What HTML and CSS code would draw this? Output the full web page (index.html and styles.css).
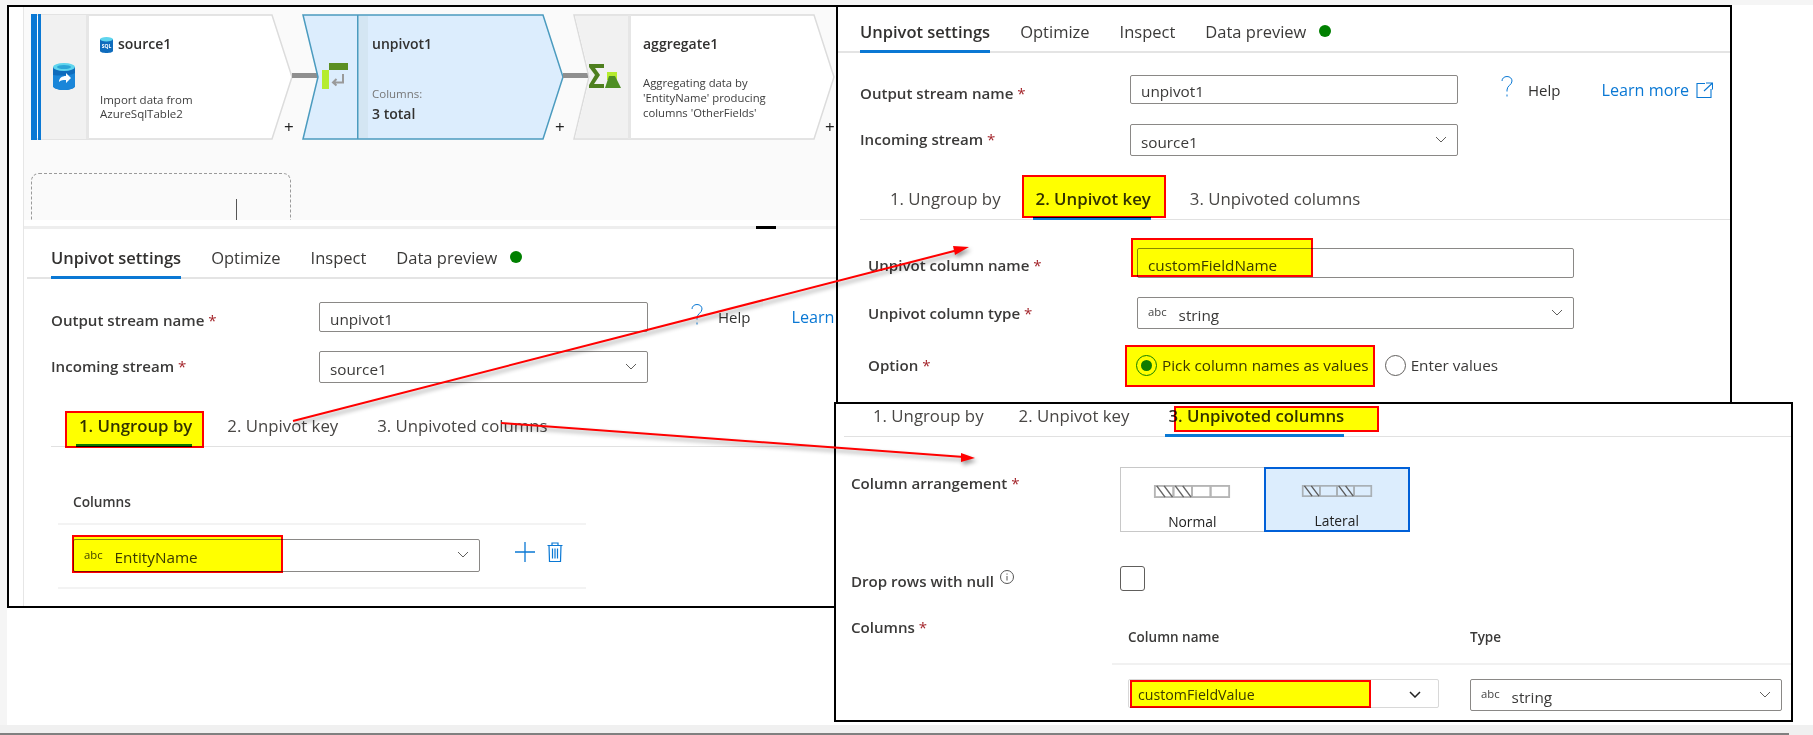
FILE: index.html
```html
<!DOCTYPE html>
<html lang="en">
<head>
<meta charset="utf-8">
<title>Unpivot settings</title>
<link rel="stylesheet" href="styles.css">
</head>
<body>
<div class="desk">
  <div class="band-top"></div>
  <div class="band-left"></div>
  <div class="band-bottom"></div>

  <section class="window win-main">
    <div class="workspace">
      <div class="canvas">
        <div class="node node-source">
          <svg class="node-bg" viewBox="0 0 262 126" width="262" height="126">
            <polygon points="1,1 241,1 261,63 241,125 1,125" fill="#fff" stroke="#dcdcdc" stroke-width="1.5"/>
            <rect x="10" y="1" width="45" height="124" fill="#f1f1f1"/>
            <rect x="55" y="1" width="3" height="124" fill="#e6e6e6"/>
            <rect x="0" y="0" width="6" height="126" fill="#0a78d4"/>
            <rect x="7" y="0" width="3" height="126" fill="#0a78d4"/>
          </svg>
          <div class="cell">
            <svg class="ico-src" viewBox="0 0 22 27" width="22" height="27">
              <path d="M0 4v19c0 2 5 4 11 4s11-2 11-4V4z" fill="#0f6cbd"/>
              <path d="M0 12v11c0 2 5 4 11 4s11-2 11-4V10c-5 3-15 3-22 2z" fill="#1a86d9"/>
              <ellipse cx="11" cy="4" rx="11" ry="4" fill="#5fd5ee"/>
              <ellipse cx="11" cy="4" rx="7" ry="2" fill="#2ba5d8"/>
              <path d="M6 19c0-4 3-6 7-6v-3l5 5-5 5v-3c-3 0-5 0-7 2z" fill="#fff"/>
            </svg>
          </div>
          <div class="body body-source">
            <div class="node-title">
              <svg class="ico-sql" viewBox="0 0 13 16" width="13" height="16">
                <path d="M0 2v12c0 1 3 2 6.500 2s6.500-1 6.500-2V2z" fill="#0f6cbd"/>
                <ellipse cx="6.500" cy="2.200" rx="6.500" ry="2.200" fill="#5fd5ee"/>
                <text x="6.500" y="11" class="sql-text" text-anchor="middle">SQL</text>
              </svg>
              <span>source1</span>
            </div>
            <p class="desc desc-source">Import data from<br>AzureSqlTable2</p>
          </div>
        </div>
        <div class="link link-a"></div>
        <span class="add add-a">+</span>

        <div class="node node-unpivot">
          <svg class="node-bg" viewBox="0 0 262 126" width="262" height="126">
            <polygon points="1,1 241,1 261,63 241,125 1,125 16,63" fill="#dcedfd" stroke="#4b9bbf" stroke-width="1.5"/>
            <rect x="56" y="2" width="10" height="122" fill="#d4e6f3"/>
            <rect x="55" y="1" width="1.500" height="124" fill="#4b9bbf"/>
          </svg>
          <div class="cell">
            <svg class="ico-unp" viewBox="0 0 26 26" width="26" height="26">
              <rect x="0" y="7" width="7" height="19" fill="#b5ec2e"/>
              <rect x="7" y="0" width="19" height="7" fill="#5b8f22"/>
              <path d="M21 11v8.500H11M14.500 16l-3.500 3.500 3.500 3" fill="none" stroke="#9a9a9a" stroke-width="2"/>
            </svg>
          </div>
          <div class="body body-unpivot">
            <div class="node-title"><span>unpivot1</span></div>
            <p class="meta-label">Columns:</p>
            <p class="meta-value">3 total</p>
          </div>
        </div>
        <div class="link link-b"></div>
        <span class="add add-b">+</span>

        <div class="node node-agg">
          <svg class="node-bg" viewBox="0 0 262 126" width="262" height="126">
            <polygon points="1,1 241,1 261,63 241,125 1,125 16,63" fill="#fff" stroke="#dcdcdc" stroke-width="1.5"/>
            <polygon points="2,2 55,2 55,124 2,124 17,63" fill="#f1f1f1"/>
            <rect x="55" y="1" width="3" height="124" fill="#e6e6e6"/>
          </svg>
          <div class="cell">
            <svg class="ico-agg" viewBox="0 0 33 24" width="33" height="24">
              <path d="M0 0h15v4H6l5 7-6 9h10v4H0v-3l6-10L0 3z" fill="#4e7f1f"/>
              <rect x="18" y="8" width="10" height="8" fill="#b5ec2e"/>
              <path d="M20 12h6l6 12H16z" fill="#4e8f24"/>
            </svg>
          </div>
          <div class="body body-agg">
            <div class="node-title"><span>aggregate1</span></div>
            <p class="desc desc-agg">Aggregating data by<br>'EntityName' producing<br>columns 'OtherFields'</p>
          </div>
        </div>
        <span class="add add-c">+</span>

        <div class="ghost"><span class="ghost-bar"></span></div>
      </div>
      <div class="splitter"><span class="splitter-grip"></span></div>

      <div class="tabs tabs-main">
        <span class="tab is-active">Unpivot settings</span>
        <span class="tab">Optimize</span>
        <span class="tab">Inspect</span>
        <span class="tab tab-preview">Data preview</span>
        <span class="dot"></span>
      </div>

      <div class="form form-main">
        <label class="label label-low">Output stream name <i>*</i></label>
        <div class="input">unpivot1</div>
        <div class="help">
          <svg class="ico-q" viewBox="0 0 12 21" width="12" height="21"><path d="M1 5c0-2.500 2-4.500 5-4.500s5 2 5 4.500c0 4-5 4.500-5 9v1.500M6 18.500v2" fill="none" stroke="#0a78d4" stroke-width="1"/></svg>
          <span class="help-text">Help</span>
          <a class="learn">Learn more</a>
        </div>
        <label class="label label-high">Incoming stream <i>*</i></label>
        <div class="input select">source1
          <svg class="chev" viewBox="0 0 12 7" width="12" height="7"><path d="M1 1l5 5 5-5" fill="none" stroke="#605e5c"/></svg>
        </div>
      </div>

      <div class="subtabs sub-main">
        <span class="subtab sub-a is-active"><b class="mark mark-ungroup"></b>1. Ungroup by</span>
        <span class="subtab sub-b">2. Unpivot key</span>
        <span class="subtab sub-c">3. Unpivoted columns</span>
      </div>

      <div class="col-table">
        <div class="col-head">Columns</div>
        <div class="col-row">
          <div class="input select entity">
            <b class="mark mark-entity"></b>
            <span class="abc">abc</span><span>EntityName</span>
            <svg class="chev" viewBox="0 0 12 7" width="12" height="7"><path d="M1 1l5 5 5-5" fill="none" stroke="#605e5c"/></svg>
          </div>
          <svg class="ico-plus" viewBox="0 0 20 20" width="20" height="20"><path d="M10 0v20M0 10h20" stroke="#0a78d4" stroke-width="1.300"/></svg>
          <svg class="ico-trash" viewBox="0 0 16 20" width="16" height="20"><path d="M0.500 3.500h15M5 3.500V1h6v2.500M2 3.500l.5 16h11l.5-16M5.500 6.500v10M8 6.500v10M10.500 6.500v10" fill="none" stroke="#0a78d4" stroke-width="1.200"/></svg>
        </div>
      </div>
    </div>
  </section>

  <section class="window win-key">
    <div class="tabs tabs-key">
      <span class="tab is-active">Unpivot settings</span>
      <span class="tab">Optimize</span>
      <span class="tab">Inspect</span>
      <span class="tab tab-preview">Data preview</span>
      <span class="dot"></span>
    </div>
    <div class="form form-key">
      <label class="label label-low">Output stream name <i>*</i></label>
      <div class="input input-thin">unpivot1</div>
      <div class="help">
        <svg class="ico-q" viewBox="0 0 12 21" width="12" height="21"><path d="M1 5c0-2.500 2-4.500 5-4.500s5 2 5 4.500c0 4-5 4.500-5 9v1.500M6 18.500v2" fill="none" stroke="#0a78d4" stroke-width="1"/></svg>
        <span class="help-text">Help</span>
        <a class="learn">Learn more</a>
        <svg class="ico-ext" viewBox="0 0 17 16" width="17" height="16"><path d="M9 1.500H1v14h14V7M10 1h6.500v6.500M16 1.500L8 9" fill="none" stroke="#0a78d4" stroke-width="1.100"/></svg>
      </div>
      <label class="label label-high">Incoming stream <i>*</i></label>
      <div class="input select">source1
        <svg class="chev" viewBox="0 0 12 7" width="12" height="7"><path d="M1 1l5 5 5-5" fill="none" stroke="#605e5c"/></svg>
      </div>
    </div>
    <div class="subtabs sub-key">
      <span class="subtab sub-a">1. Ungroup by</span>
      <span class="subtab sub-b is-active"><b class="mark mark-key"></b>2. Unpivot key</span>
      <span class="subtab sub-c">3. Unpivoted columns</span>
    </div>
    <div class="form form-pivot">
      <label class="label label-name">Unpivot column name <i>*</i></label>
      <div class="input input-wide"><b class="mark mark-name"></b>customFieldName</div>
      <label class="label">Unpivot column type <i>*</i></label>
      <div class="input input-wide select">
        <span class="abc">abc</span><span>string</span>
        <svg class="chev" viewBox="0 0 12 7" width="12" height="7"><path d="M1 1l5 5 5-5" fill="none" stroke="#605e5c"/></svg>
      </div>
      <label class="label">Option <i>*</i></label>
      <div class="radios">
        <span class="radio-item"><b class="mark mark-radio"></b><span class="radio is-on"></span>Pick column names as values</span>
        <span class="radio-item"><span class="radio"></span>Enter values</span>
      </div>
    </div>
  </section>

  <section class="window win-cols">
    <div class="subtabs sub-cols">
      <span class="subtab sub-a">1. Ungroup by</span>
      <span class="subtab sub-b">2. Unpivot key</span>
      <span class="subtab sub-c is-active"><b class="mark mark-cols"></b>3. Unpivoted columns</span>
    </div>
    <div class="form form-cols">
      <label class="label label-arr">Column arrangement <i>*</i></label>
      <div class="segments">
        <div class="segment">
          <svg class="ico-seg" viewBox="0 0 82 14" width="82" height="14">
            <rect x="1" y="1" width="20" height="12" fill="none" stroke="#b5b5b5" stroke-width="2"/>
            <rect x="21" y="1" width="20" height="12" fill="none" stroke="#b5b5b5" stroke-width="2"/>
            <rect x="41" y="1" width="20" height="12" fill="none" stroke="#b5b5b5" stroke-width="2"/>
            <rect x="61" y="1" width="20" height="12" fill="none" stroke="#b5b5b5" stroke-width="2"/>
            <path d="M3 1l9 12M11 1l9 12M23 1l9 12M31 1l9 12" stroke="#666" stroke-width="1.600"/>
          </svg>
          <span>Normal</span>
        </div>
        <div class="segment is-selected">
          <svg class="ico-seg" viewBox="0 0 82 14" width="82" height="14">
            <rect x="1" y="1" width="20" height="12" fill="none" stroke="#a9b0b5" stroke-width="2"/>
            <rect x="21" y="1" width="20" height="12" fill="none" stroke="#a9b0b5" stroke-width="2"/>
            <rect x="41" y="1" width="20" height="12" fill="none" stroke="#a9b0b5" stroke-width="2"/>
            <rect x="61" y="1" width="20" height="12" fill="none" stroke="#a9b0b5" stroke-width="2"/>
            <path d="M3 1l9 12M11 1l9 12M43 1l9 12M51 1l9 12" stroke="#5c5c5c" stroke-width="1.600"/>
          </svg>
          <span>Lateral</span>
        </div>
      </div>
      <label class="label label-null">Drop rows with null
        <svg class="ico-info" viewBox="0 0 14 14" width="14" height="14"><circle cx="7" cy="7" r="6.500" fill="none" stroke="#555"/><path d="M7 6v4.500M7 3.500v1.200" stroke="#555"/></svg>
      </label>
      <span class="checkbox"></span>
    </div>
    <div class="form-table">
      <label class="label label-columns">Columns <i>*</i></label>
      <div class="grid-table">
        <div class="grid-head">
          <span class="grid-name">Column name</span>
          <span>Type</span>
        </div>
        <div class="grid-row">
          <div class="input value">
            <b class="mark mark-value"></b>customFieldValue
            <svg class="chev chev-dark" viewBox="0 0 12 7" width="12" height="7"><path d="M1 1l5 5 5-5" fill="none" stroke="#222" stroke-width="1.500"/></svg>
          </div>
          <div class="input select type">
            <span class="abc">abc</span><span>string</span>
            <svg class="chev" viewBox="0 0 12 7" width="12" height="7"><path d="M1 1l5 5 5-5" fill="none" stroke="#605e5c"/></svg>
          </div>
        </div>
      </div>
    </div>
  </section>

  <svg class="arrows" viewBox="0 0 1813 735" width="1813" height="735">
    <path d="M293 421L958 250" fill="none" stroke="#f00" stroke-width="2"/>
    <polygon points="969,247 955,255 953,246" fill="#f00"/>
    <path d="M501 423L964 457" fill="none" stroke="#f00" stroke-width="2"/>
    <polygon points="975,458 961,462 961,453" fill="#f00"/>
  </svg>
</div>
</body>
</html>
```

FILE: styles.css
```css
* { box-sizing: border-box; }
html, body { margin: 0; padding: 0; }
body {
  font-family: "Open Sans", "Noto Sans", "Liberation Sans", sans-serif;
  color: #323130;
  font-size: 14px;
  background: #fff;
}
p { margin: 0; }

.desk { position: relative; width: 1813px; height: 735px; overflow: hidden; background: #fff; }
.band-top { height: 5px; background: #f5f5f5; }
.band-left { position: absolute; left: 0; top: 0; width: 7px; height: 725px; background: #f5f5f5; }
.band-bottom { position: absolute; left: 0; bottom: 0; width: 100%; height: 10px; background: #f0f0f0; }
.band-bottom::after { content: ""; position: absolute; left: 0; bottom: 0; width: 1789px; height: 2px; background: #808080; }

.window { position: absolute; background: #fff; border: 2px solid #000; overflow: hidden; }
.win-main { left: 7px; top: 5px; width: 831px; height: 603px; }
.win-key { left: 836px; top: 5px; width: 896px; height: 400px; }
.win-cols { left: 834px; top: 402px; width: 959px; height: 320px; }

.arrows { position: absolute; left: 0; top: 0; filter: drop-shadow(2px 3px 2px rgba(0, 0, 0, .4)); }

.workspace { margin-left: 14px; height: 100%; border-left: 1px solid #e6e6e6; }

/* pipeline canvas */
.canvas { position: relative; height: 213px; background: #fafafa; overflow: hidden; }
.node { position: absolute; top: 7px; width: 262px; height: 126px; display: flex; }
.node-source { left: 7px; }
.node-unpivot { left: 278px; }
.node-agg { left: 549px; }
.node-bg { position: absolute; left: 0; top: 0; }
.cell { position: relative; width: 55px; flex: none; }
.ico-src { position: absolute; left: 22px; top: 49px; }
.ico-unp { position: absolute; left: 20px; top: 49px; }
.ico-agg { position: absolute; left: 16px; top: 50px; }
.body { position: relative; padding-top: 20px; }
.body-source { padding-left: 14px; }
.body-unpivot { padding-left: 15px; }
.body-agg { padding-left: 15px; }
.node-title { display: flex; align-items: center; gap: 5px; font-size: 14px; font-weight: 600; line-height: 20px; color: #323130; }
.ico-sql { margin-top: 1px; }
.sql-text { font-size: 5px; font-weight: 700; fill: #fff; }
.desc { font-size: 11.500px; line-height: 14px; color: #3d3d3d; }
.desc-source { margin-top: 39px; }
.desc-agg { margin-top: 21px; font-size: 11.300px; line-height: 15px; }
.meta-label { margin-top: 32px; font-size: 11.500px; line-height: 16px; color: #777; }
.meta-value { margin-top: 3px; font-size: 14px; line-height: 18px; font-weight: 600; }

.link { position: absolute; top: 66px; height: 5px; background: #8f8f8f; }
.link-a { left: 268px; width: 26px; }
.link-b { left: 539px; width: 26px; }
.add { position: absolute; top: 108px; font-size: 17px; line-height: 24px; color: #222; }
.add-a { left: 260px; }
.add-b { left: 531px; }
.add-c { left: 801px; }

.ghost { position: absolute; left: 7px; top: 166px; width: 260px; height: 70px; border: 1px dashed #9a9a9a; border-radius: 8px; }
.ghost-bar { position: absolute; left: 204px; top: 25px; width: 1px; height: 40px; background: #555; }

.splitter { position: relative; margin-top: 6px; height: 3px; background: #eee; }
.splitter-grip { position: absolute; left: 732px; top: 0; width: 20px; height: 3px; background: #000; }

/* top tabs */
.tabs { display: flex; align-items: flex-end; border-bottom: 2px solid #e4e4e4; }
.tabs-main { height: 50px; margin-left: 3px; padding-left: 24px; }
.tabs-key { height: 46px; padding-left: 22px; }
.tab { margin-right: 30px; margin-bottom: -2px; padding-bottom: 8px; border-bottom: 3px solid transparent; font-size: 16.500px; line-height: 20px; color: #3b3a39; white-space: nowrap; }
.tab.is-active { border-bottom-color: #0a78d4; font-weight: 600; color: #323130; }
.tab-preview { margin-right: 13px; }
.dot { width: 12px; height: 12px; margin-bottom: 14px; border-radius: 50%; background: #008000; }

/* forms */
.form { display: grid; align-items: center; }
.form-main { grid-template-columns: 268px 329px 1fr; row-gap: 19px; padding: 23px 0 0 27px; }
.form-key { grid-template-columns: 270px 328px 1fr; row-gap: 20px; padding: 22px 0 0 22px; }
.label { font-size: 15.100px; font-weight: 600; line-height: 20px; color: #3b3a39; white-space: nowrap; }
.label-low { padding-top: 6px; }
.label-high { padding-bottom: 2px; }
.label-name { padding-top: 4px; }
.label i { font-style: normal; font-weight: 400; color: #a4262c; }
.input { position: relative; display: flex; align-items: center; height: 30px; padding: 3px 10px 0; background: #fff; border: 1px solid #8a8886; border-radius: 2px; font-size: 15.300px; color: #3b3a39; }
.input-thin { height: 29px; }
.select { height: 32px; }
.chev { position: absolute; right: 10px; top: 11px; }
.help { grid-row: 1; grid-column: 3; display: flex; align-items: center; padding-left: 43px; white-space: nowrap; }
.help-text { margin-left: 15px; font-size: 15px; color: #323130; }
.learn { margin-left: 41px; font-size: 16.200px; color: #0a78d4; }
.ico-q { margin-top: -6px; }
.ico-ext { margin-left: 7px; }

/* sub tabs */
.subtabs { display: flex; align-items: flex-end; border-bottom: 1px solid #e1e1e1; }
.subtab { position: relative; margin-bottom: -1px; padding: 0 0 8px 3px; border-bottom: 3px solid transparent; font-size: 16.800px; line-height: 20px; white-space: nowrap; color: #484644; }
.subtab.is-active { font-weight: 600; color: #323130; border-bottom-color: #0a78d4; }
.sub-main { height: 64px; margin-left: 27px; padding-left: 25px; }
.sub-key { height: 64px; margin-left: 22px; padding-left: 27px; }
.sub-cols { height: 33px; margin-left: 8px; padding-left: 26px; }
.sub-a { margin-right: 32px; }
.sub-b { margin-right: 36px; }

/* yellow annotations, multiplied over what they cover */
.mark { position: absolute; z-index: 2; display: block; background: #ff0; border: 2px solid #f00; mix-blend-mode: multiply; }
.mark-ungroup { left: -11px; top: -5px; width: 139px; height: 37px; }
.mark-key { left: -11px; top: -14px; width: 144px; height: 43px; }
.mark-cols { left: 9px; top: 0; width: 205px; height: 26px; }
.mark-entity { left: -2px; top: -5px; width: 211px; height: 38px; }
.mark-name { left: -7px; top: -11px; width: 182px; height: 39px; }
.mark-radio { left: -11px; top: -10px; width: 250px; height: 42px; }
.mark-value { left: 1px; top: 0; width: 241px; height: 28px; }

/* columns table (first window) */
.col-table { width: 528px; margin-left: 34px; }
.col-head { height: 78px; padding: 45px 0 0 15px; border-bottom: 2px solid #f3f3f3; font-size: 13.700px; font-weight: 600; line-height: 20px; color: #3b3a39; }
.col-row { display: flex; align-items: center; padding: 14px 0 15px 15px; border-bottom: 2px solid #f3f3f3; }
.entity { width: 407px; height: 33px; }
.abc { margin-right: 12px; font-size: 11.300px; font-weight: 500; color: #444; transform: translateY(-3px); }
.ico-plus { margin-left: 35px; margin-top: -7px; }
.ico-trash { margin-left: 12px; margin-top: -7px; }

/* second window */
.form-pivot { grid-template-columns: 269px 437px; row-gap: 19px; padding: 28px 0 0 30px; }
.input-wide { width: 437px; }
.radios { display: flex; align-items: center; height: 34px; margin-left: -1px; font-size: 15.300px; }
.radio-item { position: relative; display: flex; align-items: center; gap: 5px; margin-right: 16px; white-space: nowrap; color: #3b3a39; }
.radio { position: relative; display: block; width: 21px; height: 21px; border: 1px solid #605e5c; border-radius: 50%; background: #fff; }
.radio.is-on { border-color: #107c10; }
.radio.is-on::after { content: ""; position: absolute; left: 4px; top: 4px; width: 11px; height: 11px; border-radius: 50%; background: #107c10; }

/* third window */
.form-cols { grid-template-columns: 269px 1fr; row-gap: 34px; align-items: start; padding: 30px 0 0 15px; }
.form-cols .label-arr { padding-top: 6px; }
.segments { display: flex; width: 290px; height: 65px; }
.segment { display: flex; flex: 1; flex-direction: column; align-items: center; gap: 15px; padding-top: 17px; border: 1px solid #c8c8c8; font-size: 13.800px; line-height: 18px; color: #222; }
.segment.is-selected { margin-left: -1px; padding-top: 16px; border: 2px solid #0060d8; background: #dcedfd; }
.form-cols .label-null { display: flex; align-items: flex-start; gap: 6px; padding-top: 5px; }
.ico-info { margin-top: -1px; }
.checkbox { display: block; width: 25px; height: 25px; border: 1px solid #605e5c; border-radius: 3px; }
.form-table { display: grid; grid-template-columns: 261px 1fr; padding: 26px 0 0 15px; }
.grid-head { display: flex; height: 48px; padding: 10px 0 0 16px; border-bottom: 2px solid #f1f1f1; font-size: 13.500px; font-weight: 600; line-height: 20px; color: #3b3a39; }
.grid-name { width: 342px; }
.grid-row { display: flex; padding: 14px 0 0 16px; gap: 31px; }
.value { width: 311px; height: 29px; padding: 2px 0 0 9px; border-color: #d8d8d8; font-size: 14.200px; }
.type { width: 312px; }
.chev-dark { right: 17px; }
```
